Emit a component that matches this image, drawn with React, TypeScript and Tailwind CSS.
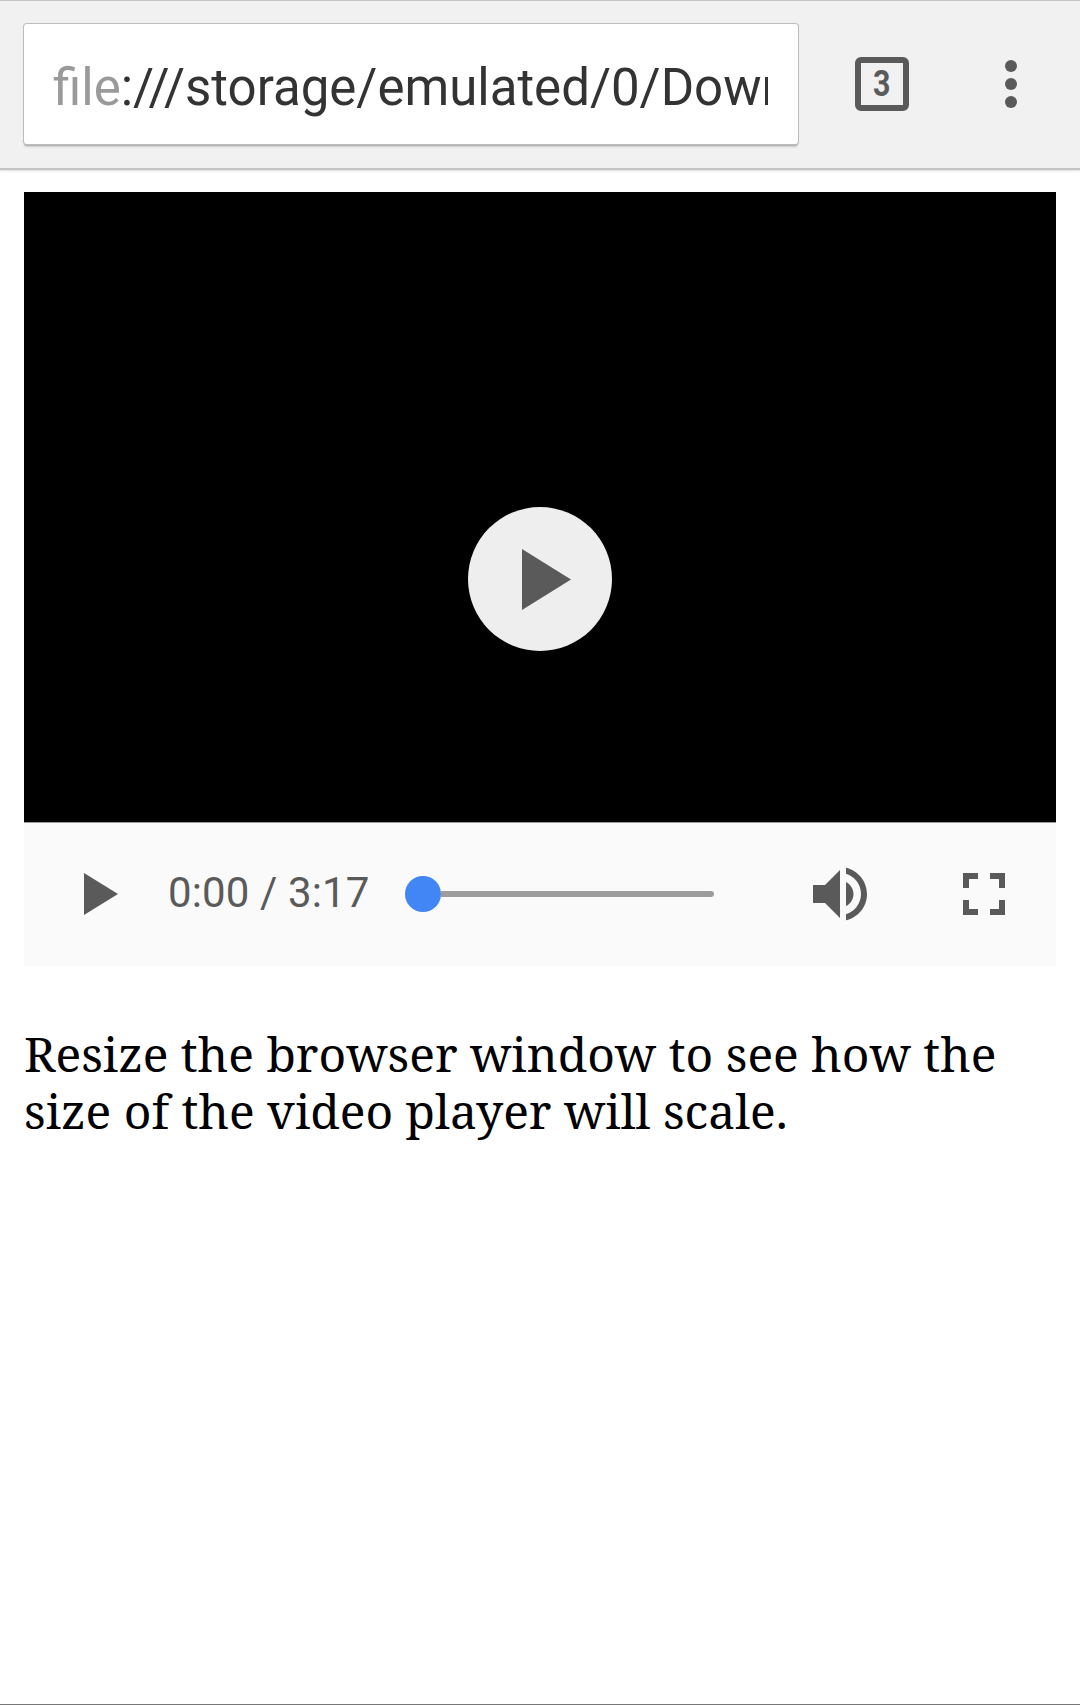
const NBSP = "\u00a0";

function Toolbar() {
  return (
    <header className="flex h-[170px] shrink-0 items-start border-t border-[#c4c4c4] border-b-2 border-b-[#c4c4c4] bg-[#f1f1f1] pl-6 pt-[23px] shadow-[0_1px_2px_#ddd]">
      <div className="flex h-[120px] w-[774px] items-center rounded-[3px] bg-white pl-[29px] shadow-[0_0_0_1px_#bdbdbd,0_2px_0_#b2b2b2,0_3px_2px_#ccc]">
        <div className="mt-[7px] w-[715px] overflow-hidden whitespace-nowrap font-[Roboto] text-[51px] leading-[60px] text-[#333]">
          <span className="text-[#9a9a9a]">file</span>:///storage/emulated/0/Download
        </div>
      </div>
      <div className="ml-[57px] mt-[33px] flex size-[54px] items-center justify-center rounded-[6px] border-[6px] border-[#5a5a5a] pb-[2px] font-[Roboto] text-[37px] font-bold leading-none text-[#5a5a5a]">
        <span className="scale-x-[0.82]">3</span>
      </div>
      <div className="ml-[96px] mt-[36px] flex flex-col gap-[6px]">
        <i className="size-3 rounded-full bg-[#5a5a5a]" />
        <i className="size-3 rounded-full bg-[#5a5a5a]" />
        <i className="size-3 rounded-full bg-[#5a5a5a]" />
      </div>
    </header>
  );
}

export default function App() {
  return (
    <div className="flex h-[1705px] w-[1080px] flex-col overflow-hidden border-b border-[#777] bg-white">
      <Toolbar />
      <main className="px-6 pt-[22px]">
        <div className="flex h-[630px] w-[1032px] items-end justify-center bg-black pb-[171px]">
          <div className="flex size-36 items-center justify-center rounded-full bg-[#eee]">
            <svg className="ml-[13px] h-[61px] w-[49px]" viewBox="0 0 49 61" fill="#5a5a5a"><path d="M0 0L49 30.5L0 61Z" /></svg>
          </div>
        </div>
        <div className="flex h-[144px] items-center border-t border-[#999] bg-[#fafafa] pb-px pl-[60px]">
          <svg className="h-[42px] w-[34px]" viewBox="0 0 34 42" fill="#5a5a5a"><path d="M0 0L34 21L0 42Z" /></svg>
          <span className="-mt-[3px] ml-[50px] w-[237px] whitespace-nowrap font-[Roboto] text-[42px] leading-[50px] tracking-[0.12px] text-[#5a5a5a]">0:00{NBSP}/{NBSP}3:17</span>
          <i className="size-9 rounded-full bg-[#4285f4]" />
          <i className="h-[6px] w-[273px] rounded-r-full bg-[#9c9c9c]" />
          <svg className="ml-[90px] size-[72px]" viewBox="0 0 24 24" fill="#5a5a5a">
            <path d="M3 9v6h4l5 5V4L7 9H3zm13.5 3c0-1.77-1.02-3.29-2.5-4.03v8.05c1.48-.73 2.5-2.25 2.5-4.02zM14 3.23v2.06c2.89.86 5 3.54 5 6.71s-2.11 5.85-5 6.71v2.06c4.01-.91 7-4.49 7-8.77s-2.99-7.86-7-8.77z" />
          </svg>
          <svg className="ml-[72px] size-[72px]" viewBox="0 0 24 24" fill="#5a5a5a">
            <path d="M7 14H5v5h5v-2H7v-3zm-2-4h2V7h3V5H5v5zm12 7h-3v2h5v-5h-2v3zM14 5v2h3v3h2V5h-5z" />
          </svg>
        </div>
        <p className="mt-[59px] font-['Noto_Serif','DejaVu_Serif',serif] text-[48px] leading-[57px] text-black">Resize the browser window to see how the<br />size of the video player will scale.</p>
      </main>
    </div>
  );
}
